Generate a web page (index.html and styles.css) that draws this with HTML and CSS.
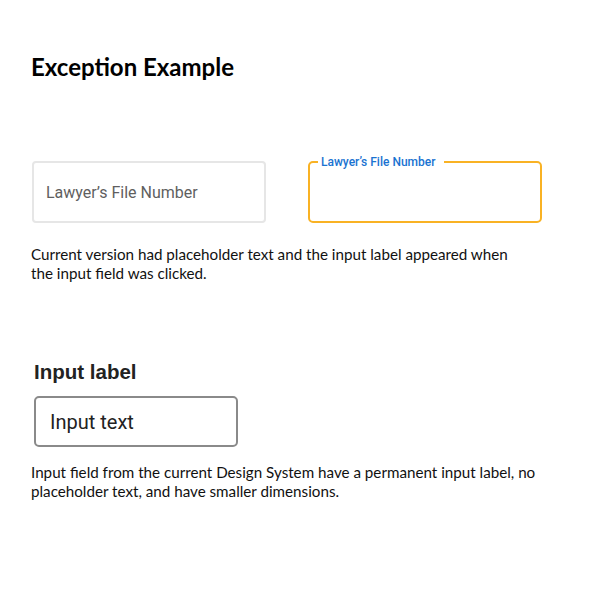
FILE: index.html
```html
<!DOCTYPE html>
<html lang="en">
<head>
    <meta charset="UTF-8">
    <meta name="viewport" content="width=device-width, initial-scale=1.0">
    <title>Exception Example</title>
    <link rel="stylesheet" href="styles.css">
</head>
<body>
    <div class="page">
        <h1 class="title">Exception Example</h1>

        <div class="old-fields">
            <div class="old-input">
                <span class="placeholder">Lawyer’s File Number</span>
            </div>
            <fieldset class="old-input focused">
                <legend>Lawyer’s File Number</legend>
            </fieldset>
        </div>
        <p class="note note-narrow">Current version had placeholder text and the input label appeared when the input field was clicked.</p>

        <div class="new-field">
            <label class="new-label">Input label</label>
            <div class="new-input">Input text</div>
        </div>
        <p class="note">Input field from the current Design System have a permanent input label, no placeholder text, and have smaller dimensions.</p>
    </div>
</body>
</html>
```

FILE: styles.css
```css
body {
    margin: 0;
    background: #fff;
    color: #111;
    font-family: Lato, "Noto Sans", sans-serif;
}
.page {
    width: 600px;
    height: 600px;
    padding: 52px 31px 0;
    box-sizing: border-box;
}
.title {
    margin: 0;
    font-size: 24px;
    font-weight: 700;
    line-height: 30px;
    color: #000;
}
.old-fields {
    display: flex;
    align-items: flex-end;
    gap: 42px;
    margin-top: 74px;
    padding-left: 1px;
}
.old-input {
    width: 234px;
    height: 62px;
    box-sizing: border-box;
    border: 2px solid #e6e6e6;
    border-radius: 4px;
    display: flex;
    align-items: center;
    padding: 0 12px;
    margin: 0;
}
.placeholder {
    font-family: Roboto, sans-serif;
    font-size: 16px;
    color: #5f5f5f;
}
.focused {
    display: block;
    height: 67px;
    border-color: #f9b224;
    border-radius: 5px;
    padding: 0 8px;
    min-width: 0;
}
.focused legend {
    font-family: Roboto, sans-serif;
    font-size: 12px;
    font-weight: 500;
    color: #1a73d1;
    padding: 0 9px 0 3px;
    line-height: 12px;
}
.note {
    margin: 22px 0 0;
    font-size: 15.2px;
    line-height: 18.5px;
    width: 515px;
}
.note-narrow {
    width: 490px;
}
.new-field {
    display: flex;
    flex-direction: column;
    align-items: flex-start;
    gap: 12px;
    margin-top: 78px;
    padding-left: 3px;
}
.new-label {
    font-family: "Liberation Sans", Arial, sans-serif;
    font-size: 20.5px;
    font-weight: 700;
    color: #222;
}
.new-input {
    width: 204px;
    height: 51px;
    box-sizing: border-box;
    border: 2px solid #8a8a8a;
    border-radius: 5px;
    padding: 0 14px;
    display: flex;
    align-items: center;
    font-family: Roboto, sans-serif;
    font-size: 20px;
    color: #222;
}
.new-field + .note {
    margin-top: 16px;
}
```
